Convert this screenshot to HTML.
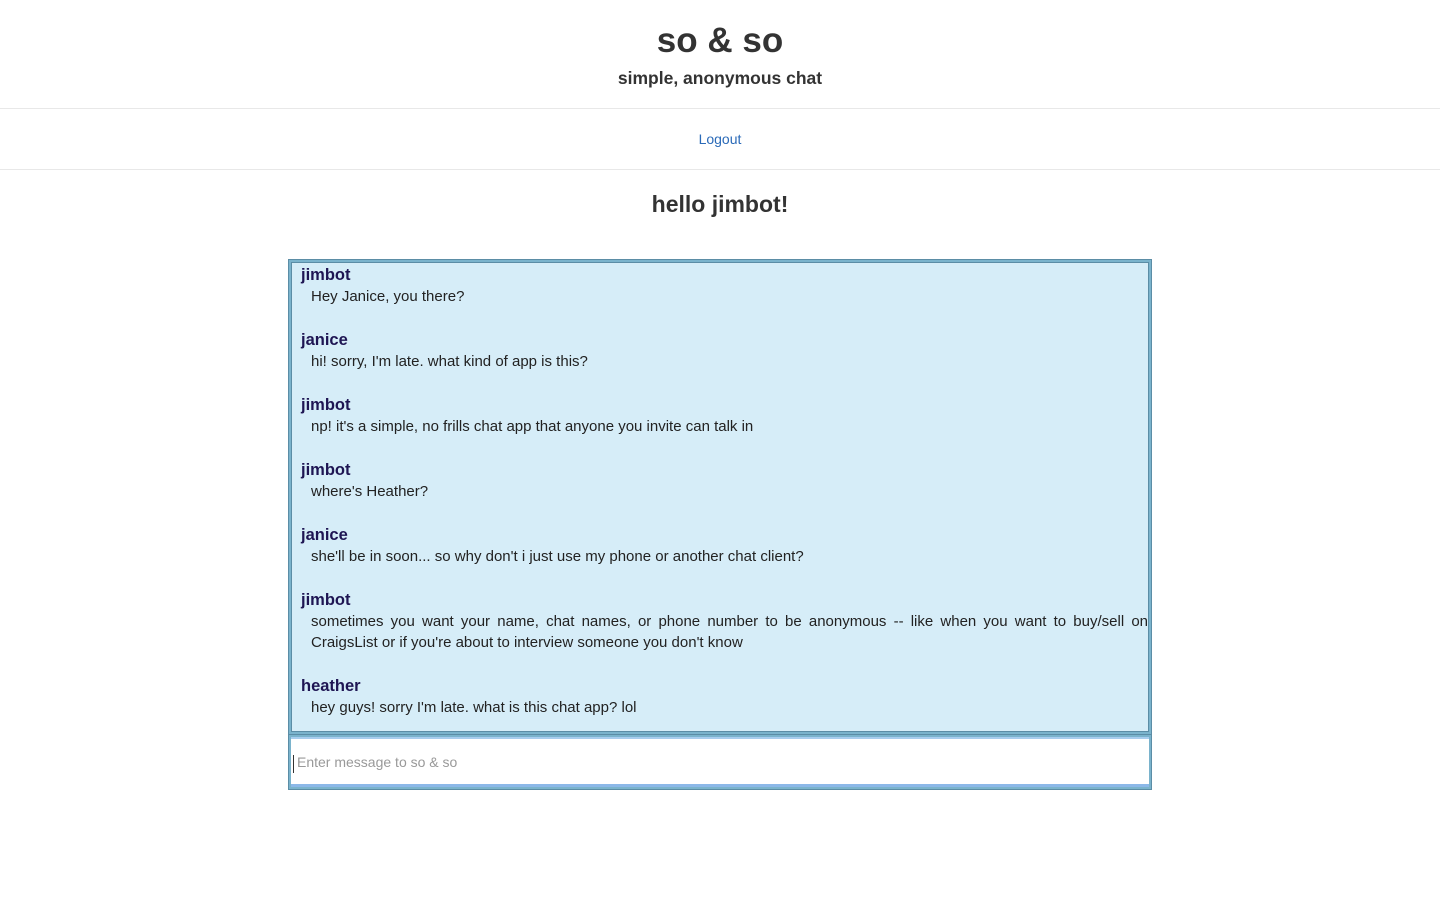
<!DOCTYPE html>
<html><head><meta charset="utf-8"><style>
body{margin:0;background:#fff;font-family:"Liberation Sans",Helvetica,Arial,sans-serif;color:#333;}
.hdr{height:108px;border-bottom:1px solid #e8e8e8;text-align:center;}
.hdr h1{margin:0;padding-top:20px;font-size:35px;line-height:42px;font-weight:bold;color:#333;}
.hdr p{margin:0;padding-top:3px;font-size:17.5px;line-height:26px;font-weight:bold;color:#333;}
.nav{height:60px;border-bottom:1px solid #e8e8e8;text-align:center;line-height:60px;font-size:14px;}
.nav a{color:#2a6ab8;text-decoration:none;}
h2{text-align:center;margin:0;padding-top:18px;font-size:23px;line-height:32px;color:#333;}
.wrap{position:absolute;left:288px;top:259px;width:864px;height:531px;background:#5b8da6;box-sizing:border-box;}
.chat{position:absolute;left:1px;top:1px;right:1px;height:474px;background:#d6edf8;border:2px solid #7ab3cc;box-sizing:border-box;}
.chat .in{position:absolute;left:0;top:0;right:0;bottom:0;border:1px solid #5b8da6;}
.m{padding-left:9px;}
.n{font-weight:bold;color:#1e1553;font-size:16.5px;line-height:22px;}
.t{padding-left:10px;font-size:15px;line-height:21px;color:#222;text-align:justify;}
.inp{position:absolute;left:1px;top:476px;right:1px;bottom:1px;background:#7ab3cc;padding:2px 2px;box-sizing:border-box;}
.inp div{background:#fff;height:100%;border-top:2px solid #a8cdee;border-bottom:3px solid #8cb8e8;box-sizing:border-box;font-size:14px;color:#999;line-height:46px;padding-left:6px;position:relative;}
.inp div:before{content:"";position:absolute;left:2px;top:16px;width:1px;height:18px;background:#333;}
</style></head><body>
<div class="hdr"><h1>so &amp; so</h1><p>simple, anonymous chat</p></div>
<div class="nav"><a href="#">Logout</a></div>
<h2>hello jimbot!</h2>
<div class="wrap">
<div class="chat"><div class="in">
<div style="padding-top:1px"></div>
<div class="m"><div class="n">jimbot</div><div class="t">Hey Janice, you there?</div></div>
<div style="height:22px"></div>
<div class="m"><div class="n">janice</div><div class="t">hi! sorry, I'm late. what kind of app is this?</div></div>
<div style="height:22px"></div>
<div class="m"><div class="n">jimbot</div><div class="t">np! it's a simple, no frills chat app that anyone you invite can talk in</div></div>
<div style="height:22px"></div>
<div class="m"><div class="n">jimbot</div><div class="t">where's Heather?</div></div>
<div style="height:22px"></div>
<div class="m"><div class="n">janice</div><div class="t">she'll be in soon... so why don't i just use my phone or another chat client?</div></div>
<div style="height:22px"></div>
<div class="m"><div class="n">jimbot</div><div class="t">sometimes you want your name, chat names, or phone number to be anonymous -- like when you want to buy/sell on CraigsList or if you're about to interview someone you don't know</div></div>
<div style="height:22px"></div>
<div class="m"><div class="n">heather</div><div class="t">hey guys! sorry I'm late. what is this chat app? lol</div></div>
</div></div>
<div class="inp"><div>Enter message to so &amp; so</div></div>
</div>
</body></html>
